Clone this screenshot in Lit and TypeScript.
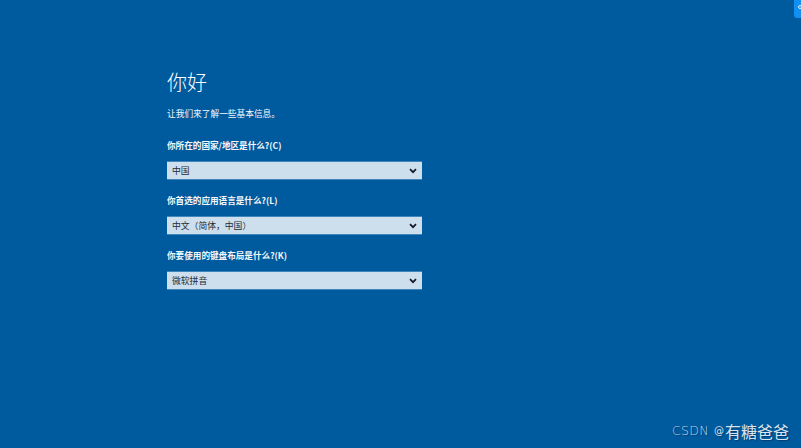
import { LitElement, html, css, svg } from "lit";
import { customElement } from "lit/decorators.js";

const chevron = svg`<svg class="chev" width="8" height="6" viewBox="0 0 8 6"><path d="M1 1.2 L4 4.2 L7 1.2" fill="none" stroke="#101a24" stroke-width="1.7"/></svg>`;

@customElement("app-root")
export class AppRoot extends LitElement {
  static styles = css`
    :host { display: block; width: 801px; height: 448px; }
    .page {
      position: relative; width: 801px; height: 448px; overflow: hidden;
      background: #005a9e; box-sizing: border-box;
      padding: 68px 0 0 167px;
      font-family: "Noto Sans CJK SC", sans-serif; color: #fff;
    }
    h1 { margin: 0; font-size: 20px; line-height: 28px; font-weight: 300; color: #ffffff; }
    .sub { margin: 11px 0 0; font-size: 8.7px; line-height: 13px; color: #f4f8fb; }
    .field { margin-top: 14px; }
    .field.first { margin-top: 19px; }
    label { display: block; font-size: 8.6px; line-height: 13px; font-weight: 700; color: #f4f8fb; }
    .select {
      display: flex; align-items: center; justify-content: space-between;
      box-sizing: border-box; width: 255px; height: 19px; margin-top: 9px;
      padding: 0 5px 0 5px; background: #cddeed; border: 1px solid #3f86bd;
      border-width: 1px 0; font-size: 8.8px; color: #222c36;
    }
    .chev { margin-right: 0.5px; }
    .tab {
      position: absolute; top: -6px; right: -6px; width: 13px; height: 24px;
      background: #118ff2; border-radius: 3px;
    }
    .tab::after {
      content: ""; position: absolute; left: 4px; top: 11px; width: 2px; height: 2px;
      border: 1.5px solid #e6f3fd; border-radius: 50%;
    }
    .mark {
      position: absolute; right: 12px; bottom: 7px;
      display: flex; align-items: center;
      font-size: 16px; line-height: 20px; color: #d6e5f1;
      text-shadow: 1px 1px 1px rgba(0, 40, 80, 0.6);
    }
    .latin { font-family: "DejaVu Sans", sans-serif; font-size: 12.6px; font-weight: 300; letter-spacing: 0.3px; color: #b9d3e8; }
    .at { font-family: "DejaVu Sans", sans-serif; font-size: 10px; margin: 0 1px 0 5px; color: #d6e5f1; }
  `;

  render() {
    const fields = [
      ["你所在的国家/地区是什么?(C)", "中国"],
      ["你首选的应用语言是什么?(L)", "中文（简体，中国）"],
      ["你要使用的键盘布局是什么?(K)", "微软拼音"],
    ];
    return html`<div class="page">
      <h1>你好</h1>
      <p class="sub">让我们来了解一些基本信息。</p>
      ${fields.map(([l, v], i) => html`<div class="field ${i === 0 ? "first" : ""}">
        <label>${l}</label>
        <div class="select"><span>${v}</span>${chevron}</div>
      </div>`)}
      <div class="tab"></div>
      <div class="mark"><span class="latin">CSDN</span><span class="at">@</span><span>有糖爸爸</span></div>
    </div>`;
  }
}
